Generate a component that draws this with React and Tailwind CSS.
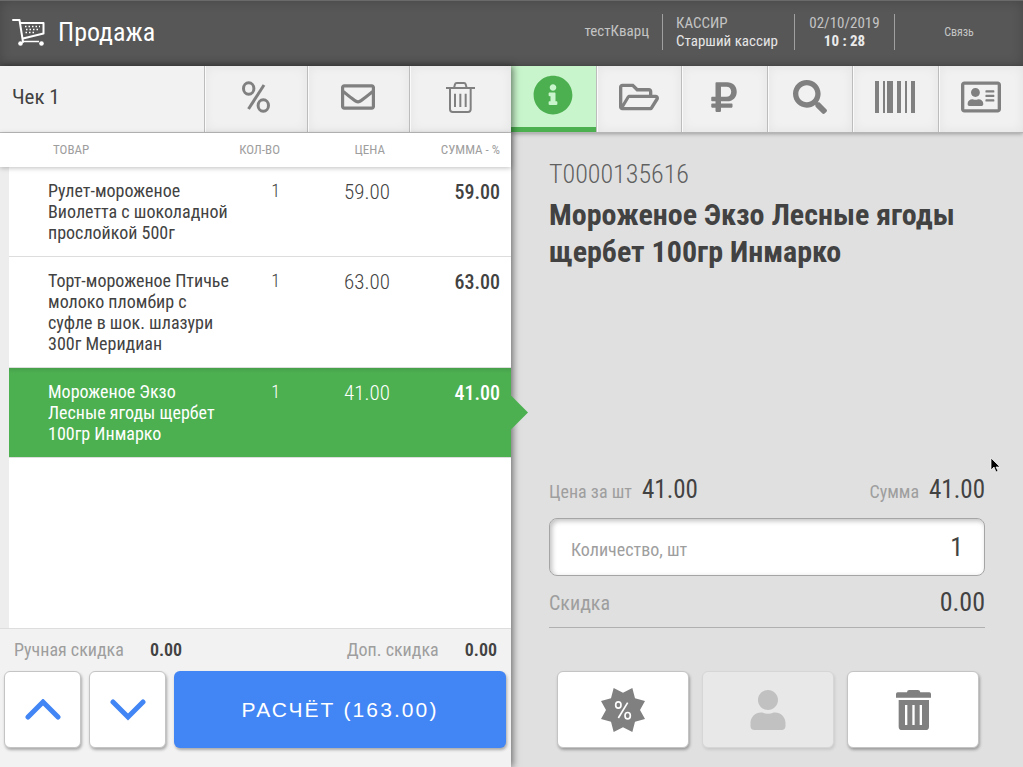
import {
  FaInfoCircle,
  FaRegAddressCard,
  FaRegEnvelope,
  FaRegFolderOpen,
  FaRubleSign,
  FaSearch,
  FaUser,
} from 'react-icons/fa'
import clsx from 'clsx'

const items = [
  { id: 1, name: 'Рулет-мороженое Виолетта с шоколадной прослойкой 500г', qty: 1, price: '59.00', sum: '59.00' },
  { id: 2, name: 'Торт-мороженое Птичье молоко пломбир с суфле в шок. шлазури 300г Меридиан', qty: 1, price: '63.00', sum: '63.00' },
  { id: 3, name: 'Мороженое Экзо Лесные ягоды щербет 100гр Инмарко', qty: 1, price: '41.00', sum: '41.00', selected: true },
]

function CartIcon() {
  return (
    <svg width="33" height="28" viewBox="0 0 33 28" fill="none" stroke="#fff" aria-hidden="true">
      <path d="M1 2h6.500l3.500 22M9 5h22.500v10.500L11 20.500" strokeWidth="2" strokeLinejoin="round" strokeLinecap="round" />
      <path d="M13 8.500h15M14 11.500h13M13.500 14.500h9" strokeWidth="1.500" strokeDasharray="1.500 2" />
      <path d="M11 23.500h16" strokeWidth="1.500" />
      <circle cx="8.500" cy="25.500" r="2.300" fill="#fff" stroke="none" />
      <circle cx="29.500" cy="25.500" r="2.300" fill="#fff" stroke="none" />
    </svg>
  )
}

function PercentIcon() {
  return (
    <svg width="28" height="32" viewBox="0 0 28 32" fill="none" stroke="currentColor" strokeWidth="3" aria-hidden="true">
      <ellipse cx="6.700" cy="7.500" rx="5.200" ry="5.800" />
      <ellipse cx="21.300" cy="24.500" rx="5.200" ry="5.800" />
      <path d="M22 4 6.500 28" />
    </svg>
  )
}

function TrashOutlineIcon() {
  return (
    <svg width="29" height="31" viewBox="0 0 87 93" fill="none" stroke="currentColor" strokeWidth="6" aria-hidden="true">
      <path d="M0 18h87M24 18l3-11q1-4 5-4h22q4 0 5 4l3 11M12 18v64q0 8 8 8h46q8 0 8-8V18" />
      <path d="M27 35v40M43 35v40M59 35v40" />
    </svg>
  )
}

function TrashIcon() {
  return (
    <svg width="35" height="40" viewBox="0 0 105 120" fill="currentColor" aria-hidden="true">
      <path d="M33 7q0-7 7-7h25q7 0 8 7h27q5 0 5 5v11H0V12q0-5 5-5Z" />
      <path fillRule="evenodd" d="M8 30h91v80q0 10-10 10H18q-10 0-10-10ZM27 45v60h7V45ZM49 45v60h7V45ZM71 45v60h7V45Z" />
    </svg>
  )
}

function BarcodeIcon() {
  return (
    <svg width="40" height="32" viewBox="0 0 40 32" fill="currentColor" aria-hidden="true">
      <path d="M0 0h4v32H0zM8 0h2v32H8zM12 0h6v32h-6zM22 0h4v32h-4zM30 0h2v32h-2zM36 0h4v32h-4z" />
    </svg>
  )
}

function DiscountBadgeIcon() {
  return (
    <svg width="44" height="44" viewBox="0 0 132 132" aria-hidden="true">
      <path
        fill="currentColor"
        d="M38 0 66 14 94 0 102 31 132 39 117 66 132 93 102 101 94 132 66 118 38 132 30 101 0 93 15 66 0 39 30 31Z"
      />
      <g fill="none" stroke="#fff" strokeWidth="5">
        <ellipse cx="52" cy="51" rx="8" ry="9.500" />
        <ellipse cx="80" cy="83" rx="8" ry="9.500" />
        <path d="M80 44 52 90" />
      </g>
    </svg>
  )
}

function Chevron({ d }) {
  return (
    <svg width="36" height="22" viewBox="0 0 36 22" fill="none" stroke="#4285f4" strokeWidth="5" strokeLinecap="round" aria-hidden="true">
      <path d={d} />
    </svg>
  )
}

function Header() {
  return (
    <header className="flex h-[66px] shrink-0 items-center border-t border-[#6a6a6a] bg-[#575757] pb-1 text-[#c4c4c4] shadow-[inset_0_0_12px_rgba(0,0,0,0.2)]">
      <div className="flex flex-1 items-center gap-[13px] pl-3 text-white">
        <CartIcon />
        <h1 className="text-[26px] leading-8">Продажа</h1>
      </div>
      <div className="pr-[13px] text-[15px]">тестКварц</div>
      <div className="h-9 w-[132px] border-l border-[#a0a0a0] pl-[13px] text-[15px] leading-[18px] whitespace-nowrap">
        <div>КАССИР</div>
        <div className="text-[#e6e6e6]">Старший кассир</div>
      </div>
      <div className="h-9 w-[101px] border-x border-[#a0a0a0] text-center text-[15px] leading-[18px]">
        <div>02/10/2019</div>
        <div className="font-bold text-[#eaeaea]">10 : 28</div>
      </div>
      <div className="w-32 text-center text-[12px]">Связь</div>
    </header>
  )
}

function ToolButton({ label, children }) {
  return (
    <button
      aria-label={label}
      className="flex h-full min-w-0 flex-1 items-center justify-center border-l border-[#bcbcbc] bg-[#f1f1f1] pb-1 text-[#808080] shadow-[inset_1px_0_0_#fafafa,inset_0_0_12px_rgba(0,0,0,0.06)]"
    >
      {children}
    </button>
  )
}

function Cell({ selected, className, children }) {
  return (
    <td className={clsx('border-b border-[#ddd] py-[13px]', selected && 'bg-[linear-gradient(#46a04a,#4caf50_5px)]', className)}>
      {children}
    </td>
  )
}

function ReceiptTable() {
  return (
    <div className="flex-1 bg-[linear-gradient(to_right,#ededed_9px,white_9px)]">
      <table className="w-full table-fixed border-separate border-spacing-0 text-[#424242]">
        <colgroup>
          <col className="w-[9px]" />
          <col />
          <col className="w-[50px]" />
          <col className="w-[110px]" />
          <col className="w-[121px]" />
        </colgroup>
        <thead className="relative shadow-[0_1px_5px_rgba(0,0,0,0.25)]">
          <tr className="h-[34px] bg-white text-[13px] text-[#9e9e9e]">
            <th colSpan={2} className="pl-[53px] text-left font-normal">ТОВАР</th>
            <th className="font-normal whitespace-nowrap">
              <div className="flex justify-end">КОЛ-ВО</div>
            </th>
            <th className="pr-[5px] text-right font-normal">ЦЕНА</th>
            <th className="pr-[11px] text-right font-normal">СУММА - %</th>
          </tr>
        </thead>
        <tbody>
          {items.map((item) => (
            <tr key={item.id} className={clsx('align-top', item.selected && 'text-white')}>
              <td />
              <Cell selected={item.selected} className="pl-[39px] text-[18px] leading-[21px]">
                {item.name}
              </Cell>
              <Cell selected={item.selected} className="text-right text-[18px] leading-[21px] font-light">
                {item.qty}
              </Cell>
              <Cell selected={item.selected} className="text-right text-[21px] leading-6 font-light">
                {item.price}
              </Cell>
              <Cell selected={item.selected} className="relative pr-[11px] text-right text-[20px] leading-6 font-medium">
                {item.sum}
                {item.selected && (
                  <span className="absolute top-1/2 left-full h-[34px] w-[17px] -translate-y-1/2 bg-[#4caf50] [clip-path:polygon(0_0,100%_50%,0_100%)]" />
                )}
              </Cell>
            </tr>
          ))}
        </tbody>
      </table>
    </div>
  )
}

function Receipt() {
  return (
    <section className="relative z-10 flex flex-col bg-[#f2f2f2] shadow-[2px_0_7px_rgba(0,0,0,0.5)]">
      <div className="flex h-[67px] items-center border-b border-[#bdbdbd]">
        <h2 className="w-2/5 pb-[2px] pl-3 text-[21px] text-[#424242]">Чек 1</h2>
        <div className="flex h-full flex-1">
          <ToolButton label="Скидка на чек"><PercentIcon /></ToolButton>
          <ToolButton label="Отправить"><FaRegEnvelope size={34} /></ToolButton>
          <ToolButton label="Удалить чек"><TrashOutlineIcon /></ToolButton>
        </div>
      </div>
      <ReceiptTable />
      <div className="flex h-[43px] items-center justify-between border-t border-[#ddd] px-[14px] pb-[2px] text-[18px] text-[#9e9e9e]">
        <div className="flex gap-[26px]">
          Ручная скидка <b className="font-semibold text-[#424242]">0.00</b>
        </div>
        <div className="flex gap-[26px]">
          Доп. скидка <b className="font-semibold text-[#424242]">0.00</b>
        </div>
      </div>
      <div className="flex gap-2 pr-[5px] pb-[19px] pl-1">
        <button aria-label="Вверх" className="flex size-[77px] items-center justify-center rounded-md border border-[#c4c4c4] bg-white shadow-[1px_2px_3px_rgba(0,0,0,0.3)]">
          <Chevron d="M3 18 18 3 33 18" />
        </button>
        <button aria-label="Вниз" className="flex size-[77px] items-center justify-center rounded-md border border-[#c4c4c4] bg-white shadow-[1px_2px_3px_rgba(0,0,0,0.3)]">
          <Chevron d="M3 3 18 18 33 3" />
        </button>
        <button className="h-[77px] flex-1 rounded-md bg-[#4285f4] font-['Liberation_Sans',sans-serif] text-[21px] tracking-widest text-white shadow-[1px_2px_3px_rgba(0,0,0,0.3)]">
          РАСЧЁТ (163.00)
        </button>
      </div>
    </section>
  )
}

function Details() {
  return (
    <section className="flex flex-col bg-[#e0e0e0]">
      <nav className="flex h-[67px] border-b border-[#b5b5b5] shadow-[0_1px_4px_rgba(0,0,0,0.3)]">
        <button aria-label="Информация" className="flex h-full min-w-0 flex-1 items-center justify-center border-b-5 border-[#4caf50] bg-[#c8f5cb] pb-[3px] text-[#4caf50]">
          <FaInfoCircle size={40} />
        </button>
        <ToolButton label="Каталог"><FaRegFolderOpen size={40} /></ToolButton>
        <ToolButton label="Цена"><FaRubleSign size={34} /></ToolButton>
        <ToolButton label="Поиск"><FaSearch size={34} /></ToolButton>
        <ToolButton label="Штрихкод"><BarcodeIcon /></ToolButton>
        <ToolButton label="Карта клиента"><FaRegAddressCard size={40} /></ToolButton>
      </nav>
      <div className="flex flex-1 flex-col px-[38px] pt-[25px] pb-[19px] text-[#424242]">
        <div className="text-[26px] leading-8 font-light text-[#606060]">Т0000135616</div>
        <h2 className="mt-[6px] text-[30px] leading-[37px] font-bold">Мороженое Экзо Лесные ягоды щербет 100гр Инмарко</h2>
        <div className="mt-auto flex items-baseline justify-between text-[18px] text-[#9e9e9e]">
          <div className="flex items-baseline gap-[10px]">
            Цена за шт <span className="text-[25px] leading-8 text-[#424242]">41.00</span>
          </div>
          <div className="flex items-baseline gap-[10px]">
            Сумма <span className="text-[25px] leading-8 text-[#424242]">41.00</span>
          </div>
        </div>
        <div className="mt-3 flex h-[58px] items-baseline rounded-lg border border-[#a5a5a5] bg-white px-[21px] pt-3 shadow-[inset_2px_2px_5px_rgba(0,0,0,0.25)]">
          <label htmlFor="qty" className="text-[18px] whitespace-nowrap text-[#9e9e9e]">Количество, шт</label>
          <input id="qty" defaultValue="1" className="min-w-0 flex-1 bg-transparent text-right text-[26px] leading-8 outline-none" />
        </div>
        <div className="flex h-[52px] items-center justify-between border-b border-[#b0b0b0] pt-[2px]">
          <span className="text-[20px] text-[#9e9e9e]">Скидка</span>
          <span className="text-[26px]">0.00</span>
        </div>
        <div className="mt-[43px] grid grid-cols-3 gap-[13px] pr-[6px] pl-2">
          <button aria-label="Скидка" className="flex h-[77px] items-center justify-center rounded-md border border-[#c4c4c4] bg-white text-[#808080] shadow-[1px_2px_3px_rgba(0,0,0,0.3)]">
            <DiscountBadgeIcon />
          </button>
          <button aria-label="Продавец" disabled className="flex h-[77px] items-center justify-center rounded-md border border-[#d6d6d6] bg-[#e8e8e8] text-[#c1c1c1] shadow-[1px_2px_3px_rgba(0,0,0,0.1)]">
            <FaUser size={40} />
          </button>
          <button aria-label="Удалить" className="flex h-[77px] items-center justify-center rounded-md border border-[#c4c4c4] bg-white text-[#808080] shadow-[1px_2px_3px_rgba(0,0,0,0.3)]">
            <TrashIcon />
          </button>
        </div>
      </div>
    </section>
  )
}

export default function App() {
  return (
    <div className="relative flex min-h-screen flex-col overflow-hidden font-['Roboto_Condensed','Liberation_Sans_Narrow',Roboto,sans-serif]">
      <Header />
      <main className="grid flex-1 grid-cols-[minmax(0,511fr)_minmax(0,512fr)]">
        <Receipt />
        <Details />
      </main>
      {/* mouse pointer */}
      <svg className="absolute top-[457px] right-[22px]" width="11" height="17" viewBox="0 0 11 17" aria-hidden="true">
        <path d="M1 1v12l3-3 2 5 2-1-2-4h4z" fill="#000" stroke="#fff" strokeWidth=".7" />
      </svg>
    </div>
  )
}
